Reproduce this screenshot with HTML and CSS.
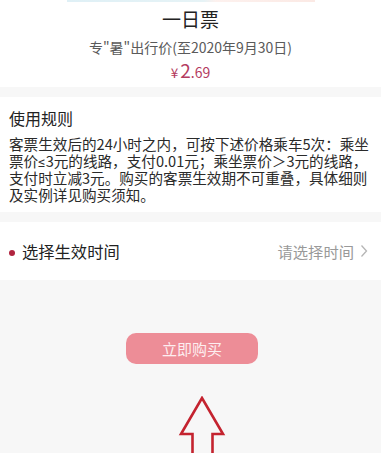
FILE: index.html
```html
<!DOCTYPE html>
<html lang="zh-CN">
<head>
<meta charset="utf-8">
<link rel="stylesheet" href="styles.css">
</head>
<body>
<div class="page">
  <section class="ticket">
    <div class="strip"></div>
    <h1 class="ticket-title">一日票</h1>
    <p class="ticket-sub">专"暑"出行价(至2020年9月30日)</p>
    <p class="price"><span class="yen">¥</span><span class="int">2</span><span class="dec">.69</span></p>
  </section>
  <section class="rules">
    <h2 class="rules-title">使用规则</h2>
    <p class="rules-text">客票生效后的24小时之内，可按下述价格乘车5次：乘坐<br>票价<span class="le">≤</span>3元的线路，支付0.01元；乘坐票价＞3元的线路，<br>支付时立减3元。购买的客票生效期不可重叠，具体细则<br>及实例详见购买须知。</p>
  </section>
  <section class="time-row">
    <div class="time-label"><span class="dot"></span>选择生效时间</div>
    <div class="time-pick">请选择时间<svg class="chev" width="8" height="14" viewBox="0 0 8 14"><path d="M1.5 1.5 L6.5 7 L1.5 12.5" fill="none" stroke="#b5b5b5" stroke-width="1.3"/></svg></div>
  </section>
  <div class="actions">
    <button class="buy">立即购买</button>
    <svg class="arrow" width="52" height="60" viewBox="0 0 52 60">
      <path d="M16.5 60 L16.5 38 L5 38 L26 2 L47 38 L36.5 38 L36.5 60" fill="none" stroke="#c4232f" stroke-width="2.6" stroke-linejoin="miter"/>
    </svg>
  </div>
</div>
</body>
</html>
```
FILE: styles.css
```css
* { box-sizing: border-box; }
html, body { margin: 0; padding: 0; }
body {
  background: #f7f7f7;
  font-family: "Noto Sans CJK SC", "Noto Sans", sans-serif;
  color: #333;
  width: 381px;
  height: 453px;
  overflow: hidden;
}
.page { display: flex; flex-direction: column; }
.ticket {
  background: #fff;
  height: 87px;
  display: flex;
  flex-direction: column;
  align-items: center;
}
.strip {
  width: 248px;
  height: 2px;
  background: linear-gradient(90deg, #dff0f6 0%, #e6f3f6 55%, #fdf1ee 60%, #fbe9e4 100%);
}
.ticket-title {
  margin: 2px 0 0;
  font-size: 19px;
  font-weight: 400;
  line-height: 30px;
  color: #222;
}
.ticket-sub {
  margin: 0;
  font-size: 14px;
  line-height: 26px;
  color: #5a5a5a;
}
.price {
  margin: 0;
  line-height: 20px;
  color: #b43c5f;
  display: flex;
  align-items: baseline;
}
.yen { font-size: 13.5px; margin-right: 2px; }
.int { font-size: 19px; }
.dec { font-size: 14px; }
.rules {
  margin-top: 10px;
  background: #fff;
  height: 115px;
  padding: 9px 2px 0 9px;
}
.rules-title {
  margin: 0;
  font-size: 16px;
  font-weight: 400;
  line-height: 24px;
  color: #222;
}
.rules-text {
  margin: 6px 0 0;
  font-size: 14.6px;
  line-height: 16.6px;
  color: #2a2a2a;
}
.le { font-family: "Roboto", "Noto Sans", sans-serif; }
.time-row {
  margin-top: 10px;
  background: #fff;
  height: 58px;
  display: flex;
  align-items: center;
  justify-content: space-between;
  padding: 0 13px 0 9px;
}
.time-label {
  display: flex;
  align-items: center;
  font-size: 16.3px;
  color: #222;
}
.dot {
  width: 6px;
  height: 6px;
  border-radius: 50%;
  background: #b0243f;
  margin-right: 7px;
  margin-top: 3px;
}
.time-pick {
  display: flex;
  align-items: center;
  font-size: 15.3px;
  color: #999;
}
.chev { margin-left: 6px; }
.actions {
  display: flex;
  flex-direction: column;
  align-items: flex-start;
}
.buy {
  margin: 53px 0 0 126px;
  width: 132px;
  height: 31px;
  border: 0;
  border-radius: 10px;
  background: #ed8d97;
  color: #fdeef0;
  font-family: inherit;
  font-size: 15px;
  padding: 0;
}
.arrow {
  margin: 32px 0 0 176px;
  display: block;
}
```
